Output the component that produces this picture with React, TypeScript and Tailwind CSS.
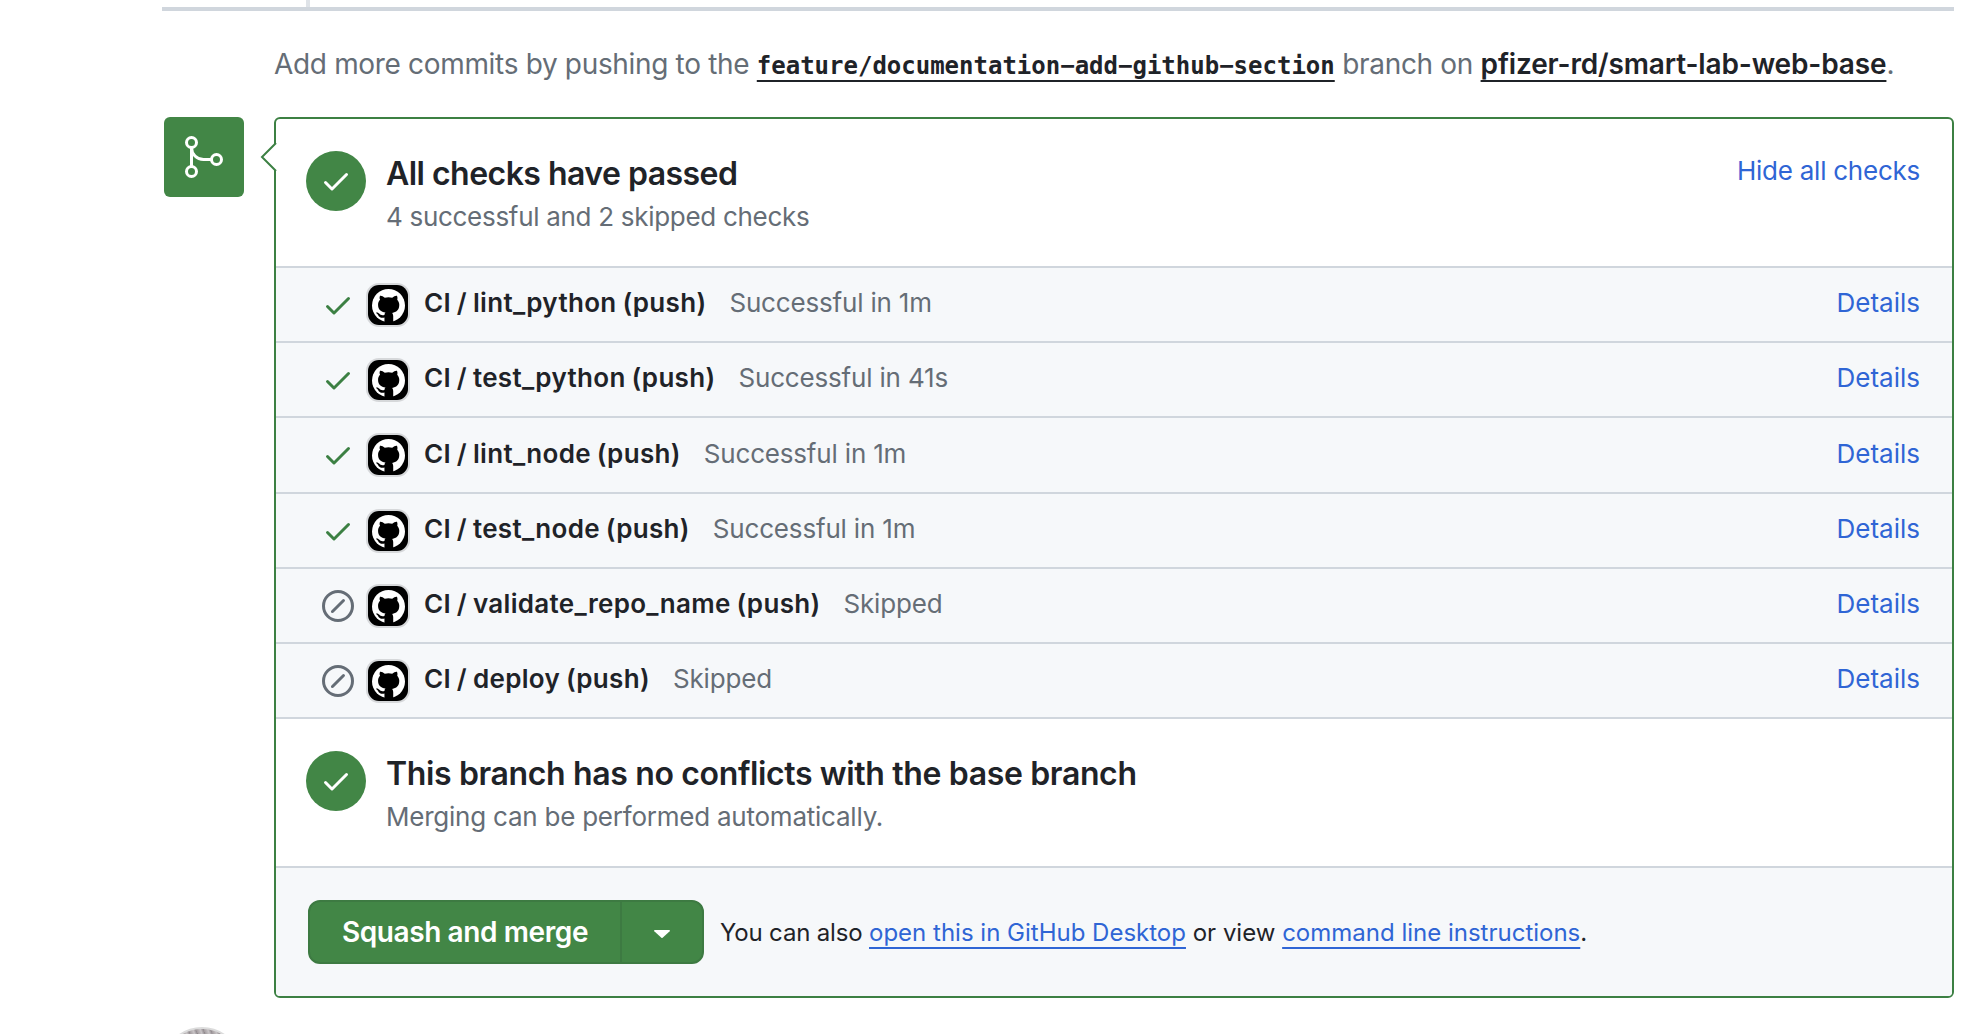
import type { ReactNode } from "react";

type Check = { name: string; note: string; status: "success" | "skipped"; height: string };

const checks: Check[] = [
  { name: "CI / lint_python (push)", note: "Successful in 1m", status: "success", height: "h-[75px]" },
  { name: "CI / test_python (push)", note: "Successful in 41s", status: "success", height: "h-[75px]" },
  { name: "CI / lint_node (push)", note: "Successful in 1m", status: "success", height: "h-[76px]" },
  { name: "CI / test_node (push)", note: "Successful in 1m", status: "success", height: "h-[75px]" },
  { name: "CI / validate_repo_name (push)", note: "Skipped", status: "skipped", height: "h-[75px]" },
  { name: "CI / deploy (push)", note: "Skipped", status: "skipped", height: "h-[75px]" },
];

function CheckIcon() {
  return (
    <svg className="block size-8 shrink-0" viewBox="0 0 16 16" fill="currentColor">
      <path d="M13.78 4.22a.75.75 0 0 1 0 1.06l-7.25 7.25a.75.75 0 0 1-1.06 0L2.22 9.28a.751.751 0 0 1 .018-1.042.751.751 0 0 1 1.042-.018L6 10.94l6.72-6.72a.75.75 0 0 1 1.06 0Z" />
    </svg>
  );
}

function SkipIcon() {
  return (
    <svg className="block size-8 shrink-0" viewBox="0 0 16 16" fill="currentColor">
      <path d="M8 0a8 8 0 1 1 0 16A8 8 0 0 1 8 0ZM1.5 8a6.5 6.5 0 1 0 13 0 6.5 6.5 0 0 0-13 0Zm9.78-2.22-5.5 5.5a.749.749 0 0 1-1.275-.326.749.749 0 0 1 .215-.734l5.5-5.5a.751.751 0 0 1 1.042.018.751.751 0 0 1 .018 1.042Z" />
    </svg>
  );
}

function MergeIcon() {
  return (
    <svg className="size-12" viewBox="0 0 24 24" fill="none" stroke="currentColor" strokeWidth="1.5">
      <circle cx="5.75" cy="4.75" r="2.5" />
      <circle cx="5.75" cy="19.25" r="2.5" />
      <circle cx="18.25" cy="13.25" r="2.5" />
      <path d="M5.75 7.25v9.5M5.75 7.25c0 3.31 2.69 6 6 6h4" />
    </svg>
  );
}

function GitHubAvatar() {
  return (
    <span className="ml-[14px] flex size-10 shrink-0 items-center justify-center rounded-[11px] bg-black text-white shadow-[0_0_0_2px_rgba(31,35,40,0.15)]">
      <svg className="mt-px block size-[33px]" viewBox="0 0 98 98">
        <path fill="#fff" d="M49 0a49 49 0 1 1 0 98a49 49 0 1 1 0-98z" />
        <path fill="#000" d="M24 20c4-1 9 2 14 6 7-2 15-2 22 0 5-4 10-7 14-6 2 4 2 8 1 12 4 5 6 9 6 15 0 16-9 22-21 24 2 3 3 6 3 9v18H37V85c-11 2-16-2-19-8-1-2-3-4-5-5-2-2 0-3 3-2 7 2 7 10 21 7 0-3 1-5 3-7-13-2-22-8-22-23 0-6 2-11 6-15-2-4-2-8 0-12z" />
      </svg>
    </span>
  );
}

type SummaryProps = { title: string; detail: string; titleTracking: string; detailTracking: string; action?: ReactNode };

function Summary({ title, detail, titleTracking, detailTracking, action }: SummaryProps) {
  return (
    <section className="flex h-[147px] shrink-0 items-start pt-8 pr-8 pl-[30px]">
      <span className="flex size-[60px] shrink-0 items-center justify-center rounded-full bg-[#428646] text-white">
        <CheckIcon />
      </span>
      <div className="mt-px ml-5 flex-1">
        <h2 className={`text-[32px] leading-[44px] font-semibold text-[#1f2328] ${titleTracking}`}>{title}</h2>
        <p className={`text-[26px] leading-[42px] text-[#656d76] ${detailTracking}`}>{detail}</p>
      </div>
      {action}
    </section>
  );
}

function CheckRow({ check }: { check: Check }) {
  return (
    <li className={`flex items-center border-t-2 border-[#d0d6dd] bg-[#f6f8fa] pr-8 pl-[46px] text-[26px] leading-[40px] ${check.height}`}>
      {check.status === "success" ? (
        <span className="text-[#3c8043]"><CheckIcon /></span>
      ) : (
        <span className="mt-px text-[#656d76]"><SkipIcon /></span>
      )}
      <GitHubAvatar />
      <span className="mb-[3px] ml-4 font-semibold tracking-[0.32px] text-[#1f2328] [word-spacing:-1px]">{check.name}</span>
      <span className="mb-[3px] ml-[23px] tracking-[-0.18px] text-[#656d76]">{check.note}</span>
      <a className="mb-[3px] ml-auto text-[#2f65d5]">Details</a>
    </li>
  );
}

export default function App() {
  return (
    <main className="flex h-[1034px] w-[1978px] flex-col overflow-hidden bg-white pr-6 pl-[162px] font-['Inter',sans-serif]">
      <div className="h-[11px] shrink-0 border-b-4 border-[#d0d6dd] pl-36">
        <div className="h-[7px] w-1 bg-[#dfe3e8]" />
      </div>

      <p className="h-[106px] shrink-0 pt-8 pl-28 text-[28px] leading-[42px] tracking-[-0.33px] whitespace-nowrap text-[#656d76]">
        Add more commits by pushing to the{" "}
        <a className="font-['DejaVu_Sans_Mono',monospace] text-[24px] font-bold tracking-normal text-[#1f2328] underline decoration-2 underline-offset-[6px] [text-decoration-skip-ink:none]">feature/documentation−add−github−section</a>{" "}
        branch on{" "}
        <a className="font-semibold tracking-[-0.147px] text-[#1f2328] underline decoration-2 underline-offset-[6px] [text-decoration-skip-ink:none]">pfizer-rd/smart-lab-web-base</a>.
      </p>

      <div className="flex shrink-0 items-start pl-0.5">
        <div className="flex size-20 shrink-0 items-center justify-center rounded-md bg-[#428646] text-white">
          <MergeIcon />
        </div>

        <div className="relative ml-[30px] flex h-[881px] flex-1 flex-col rounded-md border-2 border-[#3c8043]">
          <svg className="absolute top-[22px] -left-[16px] h-[32px] w-[17px]" viewBox="0 0 17 32" fill="none">
            <path d="M16 2 2 16l14 14z" fill="#fff" />
            <path d="M16 2 2 16l14 14" stroke="#3c8043" strokeWidth="2" />
          </svg>

          <Summary
            title="All checks have passed"
            detail="4 successful and 2 skipped checks"
            titleTracking="tracking-[-0.53px]"
            detailTracking="tracking-[-0.3px]"
            action={<a className="text-[26px] leading-[39px] tracking-[-0.25px] text-[#2f65d5]">Hide all checks</a>}
          />

          <ul>
            {checks.map((check) => (
              <CheckRow key={check.name} check={check} />
            ))}
          </ul>

          <div className="border-t-2 border-[#d0d6dd]">
            <Summary
              title="This branch has no conflicts with the base branch"
              detail="Merging can be performed automatically."
              titleTracking="tracking-[-0.36px]"
              detailTracking="tracking-[-0.23px]"
            />
          </div>

          <footer className="flex flex-1 items-center rounded-b-sm border-t-2 border-[#d0d6dd] bg-[#f6f8fa] pl-8">
            <div className="flex h-16 w-[396px] shrink-0 rounded-xl border-2 border-[#3d7a42] bg-[#428646] text-white">
              <button className="flex-1 border-r-2 border-[#3d7a42] text-[28px] font-semibold tracking-[-0.4px]">Squash and merge</button>
              <button className="flex w-20 items-center justify-center">
                <svg className="mt-1 h-2 w-4" viewBox="0 0 16 8" fill="currentColor">
                  <path d="M.8 0h14.4c.7 0 1 .8.5 1.3L8.6 7.7a.9.9 0 0 1-1.2 0L.3 1.300C-.2.8.100 0 .8 0Z" />
                </svg>
              </button>
            </div>
            <p className="mt-0.5 ml-4 text-[24px] leading-9 whitespace-nowrap text-[#1f2328]">
              <span className="tracking-[-0.17px]">You can also </span>
              <a className="text-[#2f65d5] underline decoration-2 underline-offset-[6px] [text-decoration-skip-ink:none]">open this in GitHub Desktop</a>{" "}
              or view{" "}
              <a className="text-[#2f65d5] underline decoration-2 underline-offset-[6px] [text-decoration-skip-ink:none]">command line instructions</a>.
            </p>
          </footer>
        </div>
      </div>

      <div className="mt-[29px] size-20 shrink-0 rounded-full border-2 border-[#dcdcdc] bg-[repeating-linear-gradient(70deg,#a39c9f_0px,#c9c5c7_4px,#8f888c_7px)]" />
    </main>
  );
}
